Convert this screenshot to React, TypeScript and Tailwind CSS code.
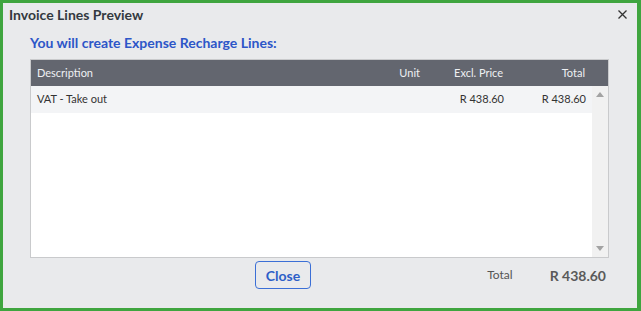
import React from "react";

export default function App() {
  return (
    <div
      className="w-[641px] h-[311px] bg-[#e9eaec] border-[3px] border-r-[4px] border-[#3fa53f] flex flex-col"
      style={{ fontFamily: "Lato, 'Open Sans', sans-serif" }}
    >
      <div className="flex items-center justify-between h-[23px] pb-[1px] pl-[6px] pr-[10px]">
        <span className="text-[14px] font-bold text-[#333940]">Invoice Lines Preview</span>
        <svg width="9" height="9" viewBox="0 0 9 9" className="mt-[1px]">
          <path d="M0.5 0.5 L8.5 8.5 M8.5 0.5 L0.5 8.5" stroke="#333" strokeWidth="1.3" />
        </svg>
      </div>
      <div className="pl-[27px] pr-[28px] flex flex-col">
        <div className="h-[33px] flex items-center text-[14px] font-bold text-[#2d56c8]">
          You will create Expense Recharge Lines:
        </div>
        <div className="border border-[#c9cacc] bg-white h-[199px] flex flex-col">
          <div className="h-[26px] bg-[#63666f] flex items-center text-[11px] text-[#eef0f3] shrink-0">
            <div className="flex-1 pl-[6px]">Description</div>
            <div className="w-[80px] text-right">Unit</div>
            <div className="w-[83px] text-right">Excl. Price</div>
            <div className="w-[82px] text-right">Total</div>
            <div className="w-[23px]"></div>
          </div>
          <div className="flex flex-1 min-h-0">
            <div className="flex-1">
              <div className="h-[27px] bg-[#f3f4f6] flex items-center text-[11px] text-[#333]">
                <div className="flex-1 pl-[6px]">VAT - Take out</div>
                <div className="w-[80px]"></div>
                <div className="w-[83px] text-right">R 438.60</div>
                <div className="w-[82px] text-right">R 438.60</div>
                <div className="w-[6px]"></div>
              </div>
            </div>
            <div className="w-[16px] bg-[#f1f1f1] flex flex-col items-center justify-between py-[6px]">
              <svg width="8" height="5" viewBox="0 0 8 5">
                <path d="M0 5 L4 0 L8 5 Z" fill="#a3a3a3" />
              </svg>
              <svg width="8" height="5" viewBox="0 0 8 5">
                <path d="M0 0 L4 5 L8 0 Z" fill="#a3a3a3" />
              </svg>
            </div>
          </div>
        </div>
        <div className="flex items-center mt-[3px] h-[28px]">
          <div className="w-[225px]"></div>
          <button className="w-[56px] h-[28px] border border-[#3b6fd6] rounded-[4px] text-[14px] font-bold text-[#2d5fc8] flex items-center justify-center">
            Close
          </button>
          <div className="flex-1"></div>
          <span className="text-[12px] text-[#555] mr-[37px]">Total</span>
          <span className="text-[14px] font-bold text-[#5a5a5a] mr-[3px]">R 438.60</span>
        </div>
      </div>
    </div>
  );
}
